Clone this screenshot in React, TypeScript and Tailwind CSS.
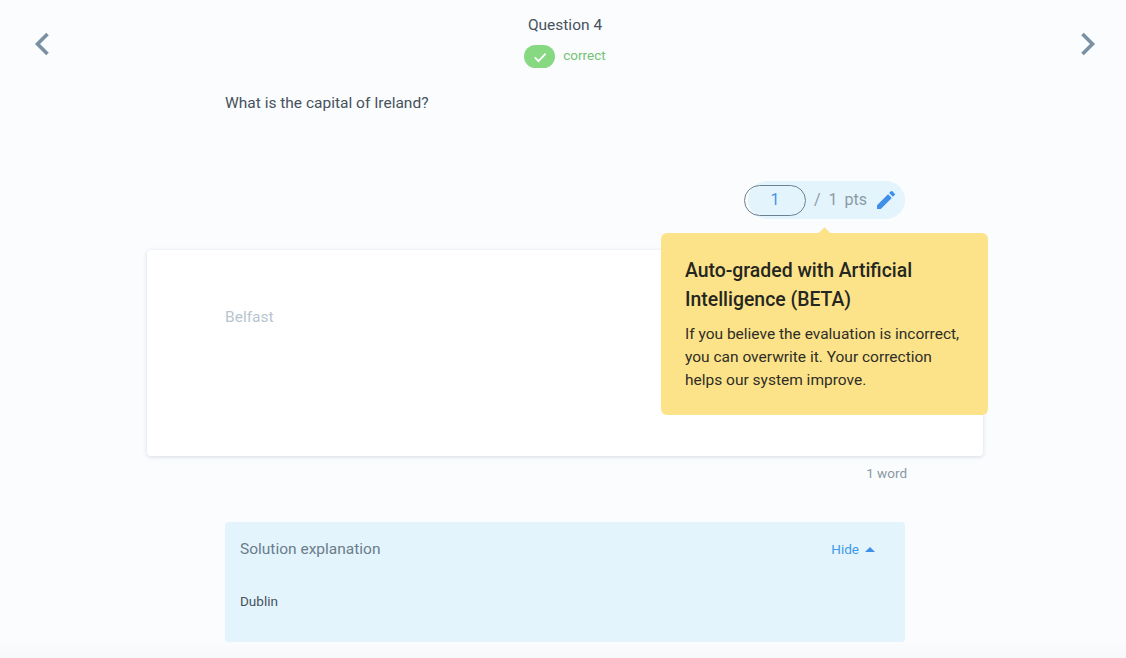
function Chevron({ flip }: { flip?: boolean }) {
  return (
    <svg width="18" height="24" viewBox="0 0 18 24" className={flip ? "rotate-180" : ""}>
      <path d="M14.500 2 4.500 12l10 10" fill="none" stroke="#7a91a3" strokeWidth="3.600" />
    </svg>
  );
}

export default function App() {
  return (
    <div className="relative h-[658px] w-full overflow-hidden bg-gradient-to-b from-[#fafcfe] from-[97%] to-[#f7f8fa] pl-[4px] font-['Roboto',sans-serif] text-[#47525c]">

      {/* Header */}
      <div className="flex items-start justify-between pl-[29px] pr-[29px] pt-[13px]">
        <div className="pt-[19px]"><Chevron /></div>
        <div className="flex flex-col items-center">
          <p className="text-[15.5px] leading-6">Question 4</p>
          <div className="mt-2 flex items-center gap-2">
            <span className="flex h-[23px] w-[31px] items-center justify-center rounded-full bg-[#86d981]">
              <svg width="18" height="18" viewBox="0 0 24 24">
                <path d="M5 12.500 10 17.500 19.500 7.500" fill="none" stroke="white" strokeWidth="2.400" />
              </svg>
            </span>
            <span className="-mt-[2px] text-[13.5px] text-[#74c274]">correct</span>
          </div>
        </div>
        <div className="pt-[19px]"><Chevron flip /></div>
      </div>

      <div className="mx-auto mt-[23px] w-[680px]">
        <p className="text-[15.500px] leading-6">What is the capital of Ireland?</p>

        {/* Points */}
        <div className="mt-[66px] flex justify-end">
          <div className="flex h-[38px] w-[157px] items-center rounded-full bg-[#e3f4fd]">
            <div className="-ml-[4px] flex h-[31px] w-[62px] items-center justify-center rounded-full border border-[#6b8192] text-base text-[#4a90e2]">1</div>
            <span className="ml-[8px] text-base text-[#8b9aa6]">/</span>
            <span className="ml-[8px] text-base text-[#8b9aa6]">1</span>
            <span className="ml-[7px] text-base text-[#8b9aa6]">pts</span>
            <svg width="24" height="24" viewBox="0 0 24 24" className="ml-[7px] shrink-0">
              <path fill="#3d8fe8" d="M3 17.250V21h3.750L17.810 9.940l-3.750-3.750L3 17.250zM20.710 7.040a1 1 0 0 0 0-1.410l-2.340-2.340a1 1 0 0 0-1.410 0l-1.830 1.830 3.750 3.750 1.830-1.830z" />
            </svg>
          </div>
        </div>
      </div>

      {/* Answer card */}
      <div className="mx-auto mt-[31px] h-[206px] w-[836px] rounded bg-white pl-[78px] pt-[55px] shadow-[0_1px_4px_rgba(60,80,100,0.18)]">
        <p className="text-[15.500px] leading-6 text-[#b8c5cf]">Belfast</p>
      </div>

      <div className="mx-auto w-[680px]">
        <p className="-mr-[2px] mt-[9px] text-right text-[13.500px] leading-[17px] text-[#8b98a3]">1 word</p>

        {/* Solution */}
        <div className="mt-[40px] h-[120px] rounded bg-[#e3f4fd] pl-[15px] pr-[16px]">
          <div className="flex items-center justify-between pr-[14px] pt-[16px]">
            <p className="text-[15.500px] leading-[22px] text-[#6b7d8a]">Solution explanation</p>
            <div className="flex items-center gap-[6px] text-[13.500px] text-[#3d9be9]">
              Hide
              <span className="h-0 w-0 border-x-[5px] border-b-[5px] border-x-transparent border-b-[#3d8fe8]" />
            </div>
          </div>
          <p className="mt-[31px] text-[13.500px] leading-5">Dublin</p>
        </div>
      </div>

      {/* Tooltip */}
      <div className="absolute left-[661px] top-[233px] h-[182px] w-[327px] rounded-md bg-[#fce38a] px-[24px] pt-[23px]">
        <span className="absolute -top-[4px] left-[159px] h-[9px] w-[9px] rotate-45 bg-[#fce38a]" />
        <p className="text-[19.400px] font-medium leading-[29px] text-[#262620]">Auto-graded with Artificial Intelligence (BETA)</p>
        <p className="mt-[9px] text-[15.500px] leading-[23px] text-[#2f2e26]">If you believe the evaluation is incorrect, you can overwrite it. Your correction helps our system improve.</p>
      </div>
    </div>
  );
}
